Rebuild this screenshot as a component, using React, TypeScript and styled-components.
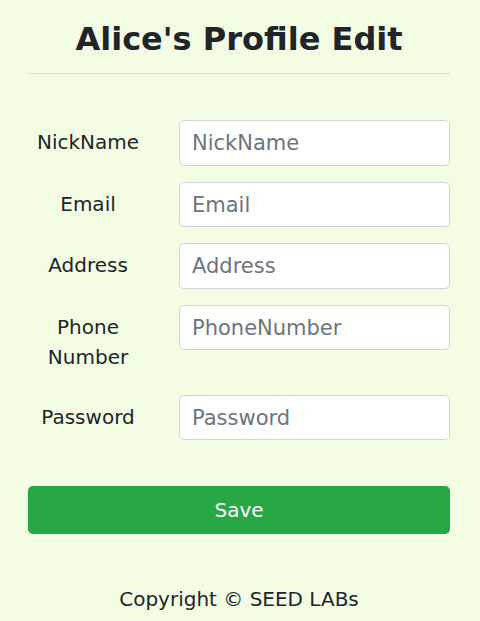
import React from 'react'
import styled, { createGlobalStyle } from 'styled-components'

const GlobalStyle = createGlobalStyle`
  html, body {
    margin: 0;
    padding: 0;
    background: #f2fde4;
  }
  body {
    font-family: "DejaVu Sans", "Liberation Sans", sans-serif;
    color: #212529;
  }
`

const Page = styled.div`
  min-height: 621px;
  box-sizing: border-box;
  padding: 20px 30px 0 28px;
  background: #f2fde4;
`

const Title = styled.h2`
  margin: 0;
  font-size: 32px;
  line-height: 1.2;
  font-weight: bold;
  text-align: center;
  color: #212529;
`

const Divider = styled.hr`
  margin: 15px 0 46px;
  border: 0;
  border-top: 1px solid rgba(0, 0, 0, 0.1);
`

const Form = styled.form`
  display: flex;
  flex-direction: column;
`

const Row = styled.div`
  display: flex;
  align-items: flex-start;
  margin-bottom: 16px;
`

const Label = styled.label`
  width: 120px;
  flex: none;
  margin-right: 31px;
  padding: 7px 0 7px;
  font-size: 20px;
  line-height: 30px;
  text-align: center;
  color: #212529;
`

const Input = styled.input`
  flex: 1;
  min-width: 0;
  height: 45.5px;
  box-sizing: border-box;
  padding: 0 12px;
  font-family: inherit;
  font-size: 21px;
  color: #495057;
  background: #fff;
  border: 1px solid #ced4da;
  border-radius: 4.8px;
  outline: none;

  &::placeholder {
    color: #6c757d;
    opacity: 1;
  }
`

const SaveButton = styled.button`
  margin-top: 30px;
  height: 48px;
  border: none;
  border-radius: 4.8px;
  background: #28a745;
  color: #fff;
  font-family: inherit;
  font-size: 20px;
  cursor: pointer;
`

const Footer = styled.p`
  margin: 50px 0 0;
  font-size: 20px;
  line-height: 30px;
  text-align: center;
  color: #212529;
`

const fields = [
  { label: 'NickName', placeholder: 'NickName', type: 'text' },
  { label: 'Email', placeholder: 'Email', type: 'text' },
  { label: 'Address', placeholder: 'Address', type: 'text' },
  { label: 'Phone Number', placeholder: 'PhoneNumber', type: 'text' },
  { label: 'Password', placeholder: 'Password', type: 'password' },
]

export default function App() {
  return (
    <Page>
      <GlobalStyle />
      <Title>Alice's Profile Edit</Title>
      <Divider />
      <Form onSubmit={e => e.preventDefault()}>
        {fields.map(f => (
          <Row key={f.label}>
            <Label>{f.label}</Label>
            <Input type={f.type} placeholder={f.placeholder} />
          </Row>
        ))}
        <SaveButton type="submit">Save</SaveButton>
      </Form>
      <Footer>Copyright © SEED LABs</Footer>
    </Page>
  )
}
